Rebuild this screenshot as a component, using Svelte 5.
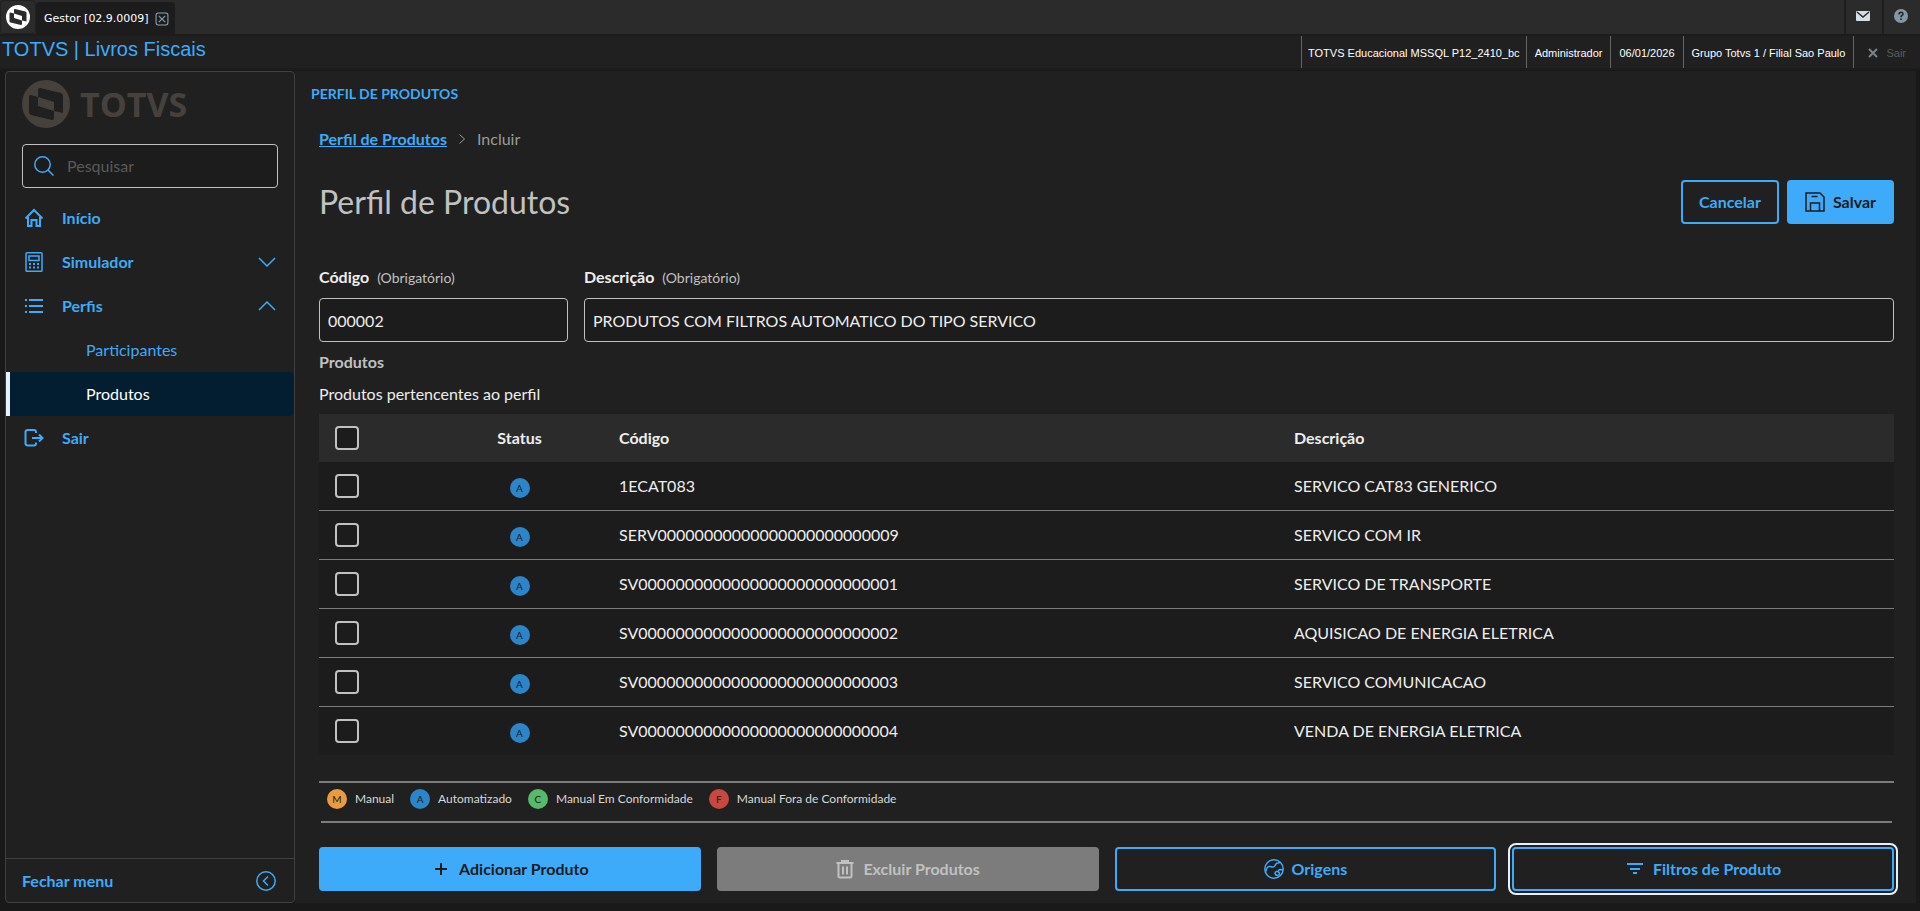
<script lang="ts">
  type Status = 'M' | 'A' | 'C' | 'F';

  let search = $state('');
  let code = $state('000002');
  let description = $state('PRODUTOS COM FILTROS AUTOMATICO DO TIPO SERVICO');

  let products = $state<{ code: string; description: string; status: Status; selected: boolean }[]>([
    { code: '1ECAT083', description: 'SERVICO CAT83 GENERICO', status: 'A', selected: false },
    { code: 'SERV00000000000000000000000009', description: 'SERVICO COM IR', status: 'A', selected: false },
    { code: 'SV0000000000000000000000000001', description: 'SERVICO DE TRANSPORTE', status: 'A', selected: false },
    { code: 'SV0000000000000000000000000002', description: 'AQUISICAO DE ENERGIA ELETRICA', status: 'A', selected: false },
    { code: 'SV0000000000000000000000000003', description: 'SERVICO COMUNICACAO', status: 'A', selected: false },
    { code: 'SV0000000000000000000000000004', description: 'VENDA DE ENERGIA ELETRICA', status: 'A', selected: false },
  ]);

  const legend: { status: Status; label: string }[] = [
    { status: 'M', label: 'Manual' },
    { status: 'A', label: 'Automatizado' },
    { status: 'C', label: 'Manual Em Conformidade' },
    { status: 'F', label: 'Manual Fora de Conformidade' },
  ];

  const session = [
    'TOTVS Educacional MSSQL P12_2410_bc',
    'Administrador',
    '06/01/2026',
    'Grupo Totvs 1 / Filial Sao Paulo',
  ];

  let anySelected = $derived(products.some((p) => p.selected));
  let allSelected = $derived(products.every((p) => p.selected));

  function toggleAll() {
    const next = !allSelected;
    for (const p of products) p.selected = next;
  }
</script>

{#snippet brand()}
  <svg class="brand-mark" viewBox="0 0 48 48" aria-hidden="true">
    <path
      fill="currentColor"
      fill-rule="evenodd"
      d="M24 0a24 24 0 1 0 0 48a24 24 0 1 0 0-48ZM18 8L39 13Q41 14 41 16V33L32 31V38Q32 40 30 40L9 35Q7 34 7 32V17Q7 15 9 15L16 17V10Q16 8 18 8ZM16 17V26L32 31V22Z"
    />
  </svg>
{/snippet}

<div class="app">
  <div class="tabbar">
    <div class="tab-home">{@render brand()}</div>
    <div class="tab">
      <span>Gestor [02.9.0009]</span>
      <button class="tab-close" aria-label="Fechar aba">
        <svg viewBox="0 0 13 13"><rect x="1" y="1" width="11" height="11" rx="2" /><path d="M3.500 3.500l6 6M9.500 3.500l-6 6" /></svg>
      </button>
    </div>
    <div class="tab-tools">
      <button aria-label="Mensagens">
        <svg width="14" height="10" viewBox="0 0 14 10"><rect width="14" height="10" rx="1" fill="#d5dfe5" /><path d="M1 1l6 5l6-5" fill="none" stroke="#2b2b2b" stroke-width="1.5" /></svg>
      </button>
      <button aria-label="Ajuda">
        <svg width="14" height="14" viewBox="0 0 14 14"><circle cx="7" cy="7" r="7" fill="#8497a5" /><path d="M5 5.500c0-3 4-3 4-.5c0 1.500-2 1.500-2 3.200M7 9.500v1.500" fill="none" stroke="#252525" stroke-width="1.6" /></svg>
      </button>
    </div>
  </div>

  <header class="titlebar">
    <span class="app-title">TOTVS | Livros Fiscais</span>
    <ul class="session">
      {#each session as item}
        <li>{item}</li>
      {/each}
      <li>
        <button class="session-exit" disabled>
          <svg viewBox="0 0 10 10"><path d="M1 1l8 8M9 1l-8 8" /></svg>
          Sair
        </button>
      </li>
    </ul>
  </header>

  <div class="body">
    <aside class="sidebar">
      <div class="logo">
        {@render brand()}
        <span>TOTVS</span>
      </div>
      <label class="search">
        <svg class="icon" viewBox="0 0 20 20"><circle cx="8.500" cy="8.500" r="7.700" /><path d="M14 14l5.500 5.500" /></svg>
        <input type="text" placeholder="Pesquisar" aria-label="Pesquisar" bind:value={search} />
      </label>
      <nav>
        <a href="#inicio">
          <svg class="icon strong" viewBox="0 0 20 20"><path d="M1.500 10.500L10 2l8.500 8.500M4 9v9h3.500v-6h5v6H16V9" /></svg>
          Início
        </a>
        <a href="#simulador">
          <svg class="icon" viewBox="0 0 20 20">
            <rect x="2" y=".8" width="16" height="18.500" rx="1" /><rect x="5" y="4" width="10" height="4.500" />
            <path class="dots" d="M5 12h10M5 15.500h10" />
          </svg>
          Simulador
          <svg class="chevron" viewBox="0 0 18 10"><path d="M1 1l8 8l8-8" /></svg>
        </a>
        <a href="#perfis">
          <svg class="icon strong" viewBox="0 0 20 20"><path d="M1 4h2M5 4h14M1 10h2M5 10h14M1 16h2M5 16h14" /></svg>
          Perfis
          <svg class="chevron" viewBox="0 0 18 10"><path d="M1 9l8-8l8 8" /></svg>
        </a>
        <a class="sub" href="#participantes">Participantes</a>
        <a class="sub active" href="#produtos" aria-current="page">Produtos</a>
        <a href="#sair">
          <svg class="icon strong" viewBox="0 0 20 20"><path d="M12 5V4q0-2-2-2H4Q1.500 2 1.500 4v11.500q0 2 2.500 2h6q2 0 2-2v-1M8 10h10.500M15 6.500l3.500 3.500l-3.500 3.500" /></svg>
          Sair
        </a>
      </nav>
      <button class="collapse">
        Fechar menu
        <svg class="icon" viewBox="0 0 20 20"><circle cx="10" cy="10" r="9.200" /><path d="M12 5.500L7.500 10l4.500 4.500" /></svg>
      </button>
    </aside>

    <main>
      <div class="routine">PERFIL DE PRODUTOS</div>
      <div class="page">
        <div class="breadcrumb">
          <a href="#perfil">Perfil de Produtos</a>
          <svg viewBox="0 0 6 10"><path d="M.5.5L5.500 5L.5 9.500" /></svg>
          <span>Incluir</span>
        </div>

        <div class="heading">
          <h1>Perfil de Produtos</h1>
          <button class="btn">Cancelar</button>
          <button class="btn primary">
            <svg class="icon" viewBox="0 0 20 20"><path d="M1 1h14l4 4v14H1ZM5.500 19v-8h9v8M6.500 4.500h6" /></svg>
            Salvar
          </button>
        </div>

        <div class="fields">
          <div class="field">
            <label for="code">Código <small>(Obrigatório)</small></label>
            <input id="code" type="text" bind:value={code} />
          </div>
          <div class="field wide">
            <label for="description">Descrição <small>(Obrigatório)</small></label>
            <input id="description" type="text" bind:value={description} />
          </div>
        </div>

        <h2>Produtos</h2>
        <p>Produtos pertencentes ao perfil</p>

        <table>
          <thead>
            <tr>
              <th class="check"><input type="checkbox" aria-label="Selecionar todos" checked={allSelected} onchange={toggleAll} /></th>
              <th class="status">Status</th>
              <th class="code">Código</th>
              <th>Descrição</th>
            </tr>
          </thead>
          <tbody>
            {#each products as p (p.code)}
              <tr>
                <td class="check"><input type="checkbox" aria-label="Selecionar {p.code}" bind:checked={p.selected} /></td>
                <td class="status"><span class="badge {p.status}">{p.status}</span></td>
                <td>{p.code}</td>
                <td>{p.description}</td>
              </tr>
            {/each}
          </tbody>
        </table>

        <ul class="legend">
          {#each legend as item}
            <li><span class="badge {item.status}">{item.status}</span>{item.label}</li>
          {/each}
        </ul>
        <hr />

        <div class="actions">
          <button class="btn primary">
            <svg class="icon strong" viewBox="0 0 20 20"><path d="M10 4v12M4 10h12" /></svg>
            Adicionar Produto
          </button>
          <button class="btn" disabled={!anySelected}>
            <svg class="icon strong" viewBox="0 0 20 20"><path d="M1.500 4h17M7 4V2h6v2M3.500 4v13q0 1.500 1.500 1.500h10q1.500 0 1.500-1.500V4M8 7.500v8M12 7.500v8" /></svg>
            Excluir Produtos
          </button>
          <button class="btn">
            <svg class="icon" viewBox="0 0 20 20">
              <circle cx="10" cy="10" r="9.200" />
              <path d="M1.500 13l1.500-4q1-2 3-1.500l2 .5q2 .5 3-1.500l1-1.500q.5-1 2-1l2-.5M19 11l-2.500-.5q-1.500 0-2 1l-.5 1h-1.500q-1.500.5-1.500 2q.5 2 2.500 2q2-.5 2-2.500l-1.500-1.500" />
            </svg>
            Origens
          </button>
          <button class="btn focused">
            <svg class="icon strong" viewBox="0 0 20 20"><path d="M2 5h16M5 10h10M8 14h4" /></svg>
            Filtros de Produto
          </button>
        </div>
      </div>
    </main>
  </div>
</div>

<style>
  :global(body) {
    margin: 0;
    background: #191919;
  }
  .app {
    min-height: 100vh;
    display: flex;
    flex-direction: column;
    color: #eee;
    font: 16px/24px Lato, 'Open Sans', sans-serif;
  }
  .app,
  .app * {
    box-sizing: border-box;
  }
  button,
  input {
    font: inherit;
    color: inherit;
  }
  button {
    cursor: pointer;
  }
  ul {
    margin: 0;
    padding: 0;
    list-style: none;
  }
  svg {
    flex: none;
    fill: none;
    stroke: currentColor;
  }
  .icon {
    width: 20px;
    height: 20px;
    stroke-width: 1.5;
  }
  .icon.strong {
    stroke-width: 2;
  }
  .dots {
    stroke-width: 2;
    stroke-dasharray: 2 2;
  }
  .brand-mark {
    stroke: none;
  }

  .tabbar {
    display: flex;
    height: 36px;
    background: #2b2b2b;
    border-bottom: 2px solid #1c1c1c;
  }
  .tab-home {
    width: 36px;
    display: grid;
    place-items: center;
    color: #fff;
    border: 1px solid #202020;
    border-radius: 4px;
  }
  .tab-home .brand-mark {
    width: 24px;
  }
  .tab {
    display: flex;
    align-items: center;
    gap: 6px;
    margin-top: 2px;
    padding: 2px 6px 0 8px;
    border-radius: 4px 4px 0 0;
    background: #1c1c1c;
    color: #fff;
    font: 11px/16px 'DejaVu Sans', sans-serif;
  }
  .tab-close {
    display: flex;
    padding: 0;
    border: 0;
    background: none;
    color: #8fa1b0;
  }
  .tab-close svg {
    width: 14px;
  }
  .tab-tools {
    display: flex;
    margin-left: auto;
  }
  .tab-tools button {
    width: 38px;
    display: grid;
    place-items: center;
    padding: 0 2px 2px 0;
    border: 0;
    border-left: 2px solid #1e1e1e;
    background: none;
  }
  .tab-tools svg {
    stroke: none;
  }

  .titlebar {
    display: flex;
    height: 34px;
    background: #202020;
    border-bottom: 2px solid #1c1c1c;
    font-family: 'Liberation Sans', Arial, sans-serif;
  }
  .app-title {
    padding: 0 2px;
    line-height: 26px;
    font-size: 20px;
    color: #3dabf9;
  }
  .session {
    display: flex;
    margin-left: auto;
    color: #fff;
    font-size: 11px;
    line-height: 34px;
  }
  .session li {
    padding: 0 8px;
    border-left: 1px solid #666;
  }
  .session li:first-child {
    padding: 0 6px;
  }
  .session-exit {
    display: flex;
    align-items: center;
    gap: 8px;
    padding: 0 6px;
    border: 0;
    background: none;
    color: #5c5c5c;
  }
  .session-exit svg {
    width: 10px;
    stroke: #7d8287;
    stroke-width: 2;
  }

  .body {
    flex: 1;
    display: flex;
    padding: 1px 4px 8px 5px;
  }
  .sidebar {
    width: 290px;
    flex: none;
    display: flex;
    flex-direction: column;
    border: 1px solid #404040;
    border-radius: 4px;
    background: #202020;
    color: #3dabf9;
  }
  .logo {
    display: flex;
    align-items: center;
    gap: 10px;
    height: 48px;
    margin: 8px 16px 16px;
    color: #47413e;
    font: 700 34px/48px 'Open Sans', sans-serif;
  }
  .logo .brand-mark {
    width: 48px;
  }
  .search {
    display: flex;
    align-items: center;
    gap: 13px;
    height: 44px;
    margin: 0 16px 8px;
    padding: 0 11px;
    border: 1px solid #c1c1c1;
    border-radius: 4px;
    background: #1c1c1c;
  }
  .search input {
    flex: 1;
    min-width: 0;
    padding: 0;
    border: 0;
    outline: 0;
    background: none;
  }
  .search input::placeholder {
    color: #5a5a5a;
    opacity: 1;
  }
  nav {
    flex: 1;
  }
  nav a {
    display: flex;
    align-items: center;
    gap: 18px;
    height: 44px;
    padding: 0 18px 0 18px;
    color: inherit;
    font-weight: 700;
    text-decoration: none;
  }
  .chevron {
    width: 18px;
    margin-left: auto;
    stroke-width: 1.5;
  }
  nav .sub {
    padding-left: 76px;
    border-left: 4px solid transparent;
    font-weight: 400;
  }
  nav .active {
    border-radius: 0 4px 4px 0;
    border-left-color: #e3f2fd;
    background: #041e31;
    color: #fff;
  }
  .collapse {
    display: flex;
    align-items: center;
    justify-content: space-between;
    height: 44px;
    padding: 0 18px 0 16px;
    border: 0;
    border-top: 1px solid #404040;
    background: none;
    font-weight: 700;
  }

  main {
    flex: 1;
    min-width: 0;
    padding: 11px 22px 0 16px;
    background: #202020;
  }
  .routine {
    color: #3dabf9;
    font-size: 14px;
    font-weight: 700;
  }
  .page {
    padding: 21px 0 0 8px;
  }
  .breadcrumb {
    display: flex;
    align-items: center;
    gap: 12px;
    color: #9a9a9a;
  }
  .breadcrumb a {
    color: #3dabf9;
    font-weight: 700;
  }
  .breadcrumb svg {
    width: 6px;
  }
  .heading {
    display: flex;
    align-items: center;
    gap: 8px;
    margin: 29px 0 41px;
  }
  h1 {
    flex: 1;
    margin: 0;
    color: #c1c1c1;
    font-size: 32px;
    font-weight: 400;
    line-height: 44px;
  }
  .btn {
    display: flex;
    align-items: center;
    justify-content: center;
    gap: 8px;
    height: 44px;
    padding: 0 16px;
    border: 2px solid #3dabf9;
    border-radius: 4px;
    background: none;
    color: #3dabf9;
    font-weight: 700;
  }
  .btn.primary {
    background: #3dabf9;
    color: #1c1c1c;
  }
  .btn:disabled {
    border-color: #7c7c7c;
    background: #7c7c7c;
    color: #c1c1c1;
  }
  .btn.focused {
    outline: 2px solid #e3f2fd;
    outline-offset: 2px;
  }

  .fields {
    display: flex;
    gap: 16px;
  }
  .field {
    flex: none;
    width: 249px;
  }
  .field.wide {
    flex: 1;
  }
  .field label {
    display: block;
    margin-bottom: 8px;
    font-weight: 700;
  }
  .field small {
    margin-left: 4px;
    color: #c1c1c1;
    font-size: 14px;
    font-weight: 400;
  }
  .field input {
    display: block;
    width: 100%;
    height: 44px;
    padding: 0 8px;
    border: 1px solid #c1c1c1;
    border-radius: 4px;
    background: #1c1c1c;
  }
  h2 {
    margin: 8px 0;
    color: #c1c1c1;
    font-size: 16px;
    line-height: 24px;
  }
  p {
    margin: 0 0 8px;
  }

  table {
    width: 100%;
    border-spacing: 0;
    table-layout: fixed;
    background: #1c1c1c;
  }
  th {
    height: 48px;
    padding: 0 16px;
    background: #2b2b2b;
    text-align: left;
  }
  td {
    height: 49px;
    padding: 0 16px;
    border-bottom: 1px solid #7c7c7c;
  }
  tbody tr:last-child td {
    height: 48px;
    border-bottom: 0;
  }
  .check {
    width: 117px;
  }
  .status {
    width: 167px;
    text-align: center;
  }
  .code {
    width: 675px;
  }
  input[type='checkbox'] {
    display: block;
    appearance: none;
    width: 24px;
    height: 24px;
    margin: 0;
    border: 2px solid #c1c1c1;
    border-radius: 4px;
    background: #1c1c1c;
  }
  input[type='checkbox']:checked {
    background: #3dabf9;
  }
  .badge {
    display: inline-block;
    width: 20px;
    height: 20px;
    border-radius: 50%;
    color: #1c1c1c;
    font-size: 10px;
    line-height: 20px;
    text-align: center;
    vertical-align: middle;
  }
  .M {
    background: #ea9b3e;
  }
  .A {
    background: #2c85c8;
  }
  .C {
    background: #56b96b;
  }
  .F {
    background: #c64840;
  }

  .legend {
    display: flex;
    align-items: center;
    gap: 16px;
    height: 40px;
    margin-top: 26px;
    padding: 0 8px 6px;
    border-top: 2px solid #7c7c7c;
    color: #d8d8d8;
    font-size: 12px;
  }
  .legend li {
    display: flex;
    align-items: center;
    gap: 8px;
  }
  hr {
    height: 2px;
    margin: 0 2px;
    border: 0;
    background: #7c7c7c;
  }
  .actions {
    display: grid;
    grid-template-columns: repeat(4, 1fr);
    gap: 16px;
    margin-top: 24px;
    padding-bottom: 12px;
  }
</style>
